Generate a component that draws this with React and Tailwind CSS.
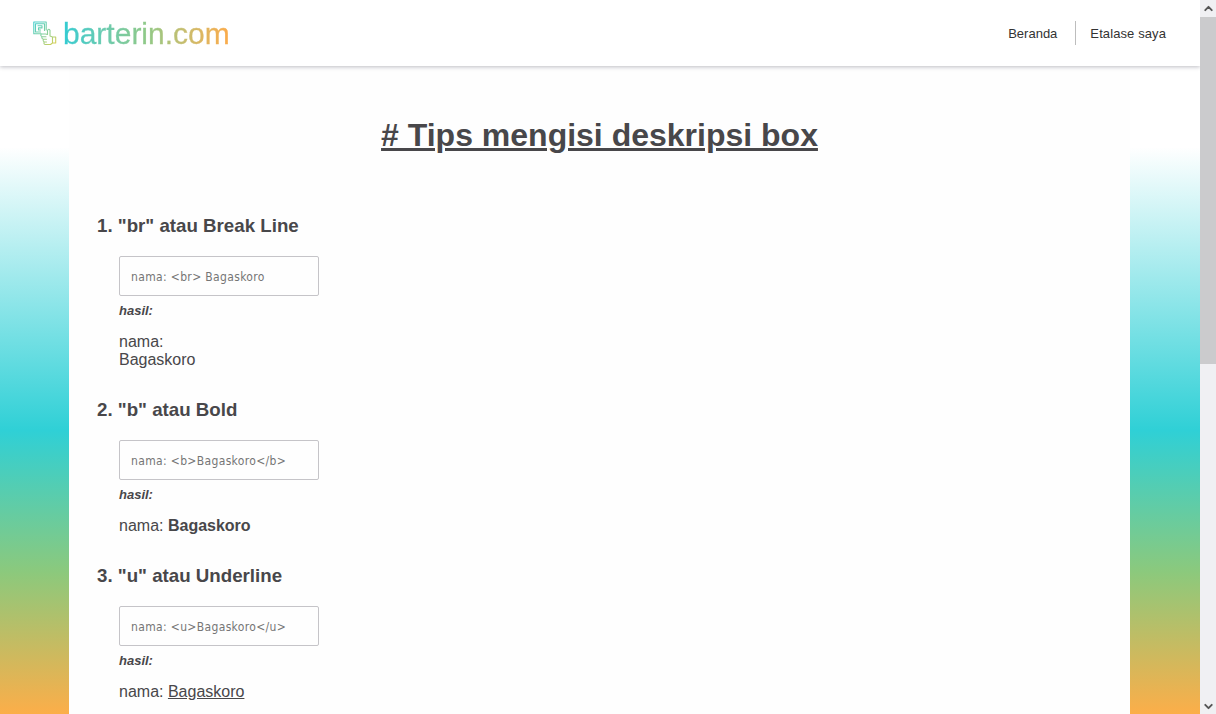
import { ChevronDown, ChevronUp } from "lucide-react";

const tips = [
  { title: '1. "br" atau Break Line', code: "nama: <br> Bagaskoro", result: <>nama:<br />Bagaskoro</> },
  { title: '2. "b" atau Bold', code: "nama: <b>Bagaskoro</b>", result: <>nama: <b>Bagaskoro</b></> },
  { title: '3. "u" atau Underline', code: "nama: <u>Bagaskoro</u>", result: <>nama: <u>Bagaskoro</u></> },
];

function Logo() {
  return (
    <div className="flex items-center">
      <svg width="24" height="25" viewBox="0 0 24 25" fill="none" stroke="url(#logo)" strokeWidth="1.1" strokeLinejoin="round" strokeLinecap="round">
        <defs>
          <linearGradient id="logo" x1="0" y1="0" x2="24" y2="25" gradientUnits="userSpaceOnUse">
            <stop stopColor="#3fcfd2" />
            <stop offset="0.55" stopColor="#8ccf96" />
            <stop offset="1" stopColor="#e8d045" />
          </linearGradient>
        </defs>
        <path d="M8 12.8H0.8V1H13.2V9M7.5 11H2.5V2.7H11.5V9.5" />
        <path d="M5 4.8H9V6.9H5.5V9H7.5" />
        <path d="M14.5 13.5V9.5Q15.5 7 17 9.3V15L19.5 16H22.7V22H19.5L17.5 23.5H12Q10.5 23 11 21H13.5M11.5 21Q9.5 20 10.5 18.3H13.5M10.5 18.3Q8.3 17.5 9 15.7H13M9 15.7Q7 14.5 8.2 13H12.5L14.5 13.5M19.5 16V22" />
      </svg>
      <span className="ml-[6px] bg-linear-to-r from-[#2fcbd2] via-[#8fc987] to-[#fcaa48] bg-clip-text pt-[2px] text-[30px] leading-[36px] text-transparent [-webkit-text-stroke:0.3px_transparent]">barterin.com</span>
    </div>
  );
}

function Tip({ title, code, result }) {
  return (
    <section className="mb-[30px]">
      <h2 className="pt-px text-[18.72px] leading-[20px] font-bold">{title}</h2>
      <div className="mt-[20px] ml-[22px]">
        <div className="flex h-[40px] w-[200px] items-center rounded-[2px] border border-[#c5c4c8] pt-[2px] pl-[11px] font-['DejaVu_Sans_Condensed','DejaVu_Sans',sans-serif] text-[12px] tracking-[0.35px] text-[#757575] [font-stretch:condensed]">{code}</div>
        <p className="mt-[7px] text-[13px] leading-[15px] font-bold italic">hasil:</p>
        <p className="mt-[15px] text-[16px] leading-[18px]">{result}</p>
      </div>
    </section>
  );
}

export default function App() {
  return (
    <div className="flex h-[714px] w-[1216px] overflow-hidden bg-white font-['Liberation_Sans',sans-serif] text-[#48474a]">
      <div className="flex w-[1200px] flex-col overflow-hidden bg-[linear-gradient(to_bottom,#ffffff_20.6%,#2fd0d6_60.3%,#8cc97c_80.2%,#fcae49_100%)]">
        <header className="z-10 flex h-[66px] shrink-0 items-center justify-between bg-white pr-[34px] pl-[33px] shadow-[0_1px_4px_rgba(40,40,60,0.3)]">
          <Logo />
          <nav className="flex items-center text-[13px] text-[#333333]">
            <a className="pt-[2px] pr-[18px]">Beranda</a>
            <a className="flex h-6 items-center border-l border-[#bdbdbd] pt-[2px] pl-[14px] tracking-[0.1px]">Etalase saya</a>
          </nav>
        </header>
        <main className="ml-[69px] h-[648px] w-[1061px] bg-[#fefefe] px-7 pt-[48px]">
          <h1 className="mb-[59px] text-center text-[32px] leading-[42px] font-bold underline">{"# Tips mengisi deskripsi box"}</h1>
          {tips.map((tip) => <Tip key={tip.title} {...tip} />)}
        </main>
      </div>
      <aside className="flex w-4 flex-col items-center bg-[#f0f0f3]">
        <div className="flex h-[17px] items-center"><ChevronUp size={13} strokeWidth={3.5} color="#555555" /></div>
        <div className="h-[347px] w-full bg-[#cbcbcd]" />
        <div className="mt-auto flex h-[15px] items-center"><ChevronDown size={13} strokeWidth={3.5} color="#555555" /></div>
      </aside>
    </div>
  );
}
